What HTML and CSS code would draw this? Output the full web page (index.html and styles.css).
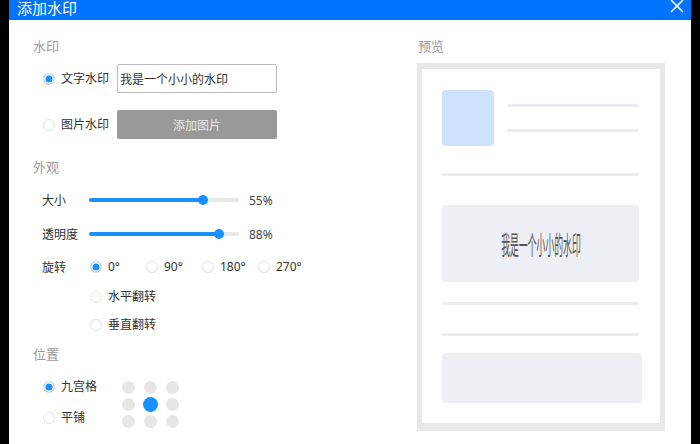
FILE: index.html
```html
<!DOCTYPE html>
<html lang="zh-CN">
<head>
<meta charset="UTF-8" />
<meta name="viewport" content="width=device-width, initial-scale=1" />
<title>添加水印</title>
<link rel="stylesheet" href="styles.css">
</head>
<body>

  <div class="dialog">
    <div class="dialog-header">
      <span class="dialog-title">添加水印</span>
      <svg class="close-btn" width="14" height="14" viewBox="0 0 14 14">
        <path d="M1 0 L13 12 M13 0 L1 12" stroke="#fff" stroke-width="1.6" fill="none" />
      </svg>
    </div>

    <div class="dialog-body">
      <!-- 设置 -->
      <div class="settings">
        <div class="section-title">水印</div>
        <div class="source-row">
          <label class="option"><span class="radio checked"></span>文字水印</label>
          <input type="text" class="text-input" value="我是一个小小的水印" />
        </div>
        <div class="source-row second">
          <label class="option"><span class="radio"></span>图片水印</label>
          <button class="upload-btn">添加图片</button>
        </div>

        <div class="section-title look">外观</div>
        <div class="range-row first">
          <span class="range-label">大小</span>
          <div class="track"><div class="fill" style="width: 76%"><span class="knob"></span></div></div>
          <span class="range-value">55%</span>
        </div>
        <div class="range-row">
          <span class="range-label">透明度</span>
          <div class="track"><div class="fill" style="width: 86.5%"><span class="knob"></span></div></div>
          <span class="range-value">88%</span>
        </div>

        <div class="rotate-row">
          <span class="range-label">旋转</span>
          <label class="option angle"><span class="radio checked"></span>0°</label>
          <label class="option angle"><span class="radio"></span>90°</label>
          <label class="option angle"><span class="radio"></span>180°</label>
          <label class="option angle"><span class="radio"></span>270°</label>
        </div>
        <div class="flip-row">
          <label class="option"><span class="radio"></span>水平翻转</label>
        </div>
        <div class="flip-row last">
          <label class="option"><span class="radio"></span>垂直翻转</label>
        </div>

        <div class="section-title place">位置</div>
        <div class="position">
          <div class="position-modes">
            <label class="option"><span class="radio checked"></span>九宫格</label>
            <label class="option"><span class="radio"></span>平铺</label>
          </div>
          <div class="dot-grid">
            <span class="dot"></span><span class="dot"></span><span class="dot"></span>
            <span class="dot"></span><span class="dot active"></span><span class="dot"></span>
            <span class="dot"></span><span class="dot"></span><span class="dot"></span>
          </div>
        </div>
      </div>

      <!-- 预览 -->
      <div class="preview">
        <div class="section-title">预览</div>
        <div class="preview-frame">
          <div class="mock-head">
            <div class="mock-avatar"></div>
            <div class="mock-lines">
              <div class="mock-line"></div>
              <div class="mock-line"></div>
            </div>
          </div>
          <div class="mock-line full"></div>
          <div class="mock-mark"><span class="mark-text">我是一个小小的水印</span></div>
          <div class="mock-line full after-mark"></div>
          <div class="mock-line full wide-gap"></div>
          <div class="mock-block"></div>
        </div>
      </div>
    </div>
  </div>

</body>
</html>
```

FILE: styles.css
```css
body {
  margin: 0;
  background: #000;
  font-family: "Noto Sans", "Noto Sans CJK SC", sans-serif;
  color: #333;
}
.dialog {
  margin: 0 9px;
  height: 444px;
  background: #fff;
  overflow: hidden;
}
.dialog-header {
  height: 20px;
  background: #0073ff;
  display: flex;
  justify-content: space-between;
  align-items: flex-start;
  padding: 0 7px 0 8px;
}
.dialog-title {
  color: #fff;
  font-size: 15px;
  line-height: 17px;
}
.close-btn {
  margin-top: 0;
}
.dialog-body {
  display: flex;
  padding: 17px 26px 0 24px;
}
.settings {
  flex: 1;
}
.section-title {
  font-size: 13px;
  line-height: 18px;
  color: #999;
}
.section-title.look { margin-top: 19px; }
.section-title.place { margin-top: 10px; }

.option {
  display: flex;
  align-items: center;
  gap: 6px;
  font-size: 12px;
  line-height: 20px;
  height: 20px;
}
.radio {
  width: 12px;
  height: 12px;
  box-sizing: border-box;
  border: 1px solid #e2e2e2;
  border-radius: 50%;
  background: #fff;
  flex: none;
}
.radio.checked {
  background: #1890ff;
  box-shadow: inset 0 0 0 1.5px #fff;
}

.source-row {
  display: flex;
  align-items: center;
  padding-left: 10px;
  margin-top: 9px;
  height: 29px;
}
.source-row.second { margin-top: 17px; }
.source-row .option { width: 74px; }
.text-input {
  width: 160px;
  height: 29px;
  box-sizing: border-box;
  border: 1px solid #bbb;
  border-radius: 2px;
  padding: 0 2px;
  font-family: inherit;
  font-size: 12px;
  color: #333;
}
.upload-btn {
  width: 160px;
  height: 29px;
  border: none;
  border-radius: 2px;
  background: #999;
  color: #e8e8e8;
  font-family: inherit;
  font-size: 12px;
}

.range-row {
  display: flex;
  align-items: center;
  height: 20px;
  padding-left: 9px;
  margin-top: 14px;
  font-size: 12px;
}
.range-label {
  width: 47px;
  font-size: 12px;
  flex: none;
}
.track {
  width: 150px;
  height: 4px;
  border-radius: 2px;
  background: #e8e8e8;
}
.fill {
  position: relative;
  height: 100%;
  border-radius: 2px;
  background: #1890ff;
}
.knob {
  position: absolute;
  right: -5px;
  top: -3px;
  width: 10px;
  height: 10px;
  border-radius: 50%;
  background: #1890ff;
}
.range-value {
  margin-left: 10px;
  color: #444;
}

.rotate-row {
  display: flex;
  align-items: center;
  height: 20px;
  padding-left: 9px;
  margin-top: 13px;
}
.rotate-row .range-label { width: 48px; }
.option.angle { width: 56px; }
.flip-row {
  padding-left: 57px;
  margin-top: 10px;
}
.flip-row.last { margin-top: 8px; }

.position {
  display: flex;
  align-items: flex-start;
  margin-top: 14px;
  padding-left: 10px;
}
.position-modes {
  width: 79px;
  display: flex;
  flex-direction: column;
  gap: 11px;
}
.dot-grid {
  display: grid;
  grid-template-columns: repeat(3, 13px);
  column-gap: 9px;
  row-gap: 4px;
  margin-top: 4px;
}
.dot {
  width: 13px;
  height: 13px;
  border-radius: 50%;
  background: #e6e6e6;
}
.dot.active {
  background: #1890ff;
  transform: scale(1.15);
}

.preview {
  width: 248px;
}
.preview .section-title { padding-left: 1px; }
.preview-frame {
  margin-top: 8px;
  height: 368px;
  box-sizing: border-box;
  border-style: solid;
  border-color: #e8e8e8;
  border-width: 6px 5px 8px 5px;
  padding: 21px 21px 0 20px;
}
.mock-head {
  display: flex;
  gap: 13px;
}
.mock-avatar {
  width: 52px;
  height: 56px;
  border-radius: 4px;
  background: #cfe2fb;
}
.mock-lines {
  flex: 1;
  display: flex;
  flex-direction: column;
  gap: 22px;
  padding-top: 14px;
}
.mock-line {
  height: 3px;
  border-radius: 2px;
  background: #ebedf3;
}
.mock-line.full { margin-top: 27px; }
.mock-line.after-mark { margin-top: 20px; }
.mock-line.wide-gap { margin-top: 28px; }
.mock-mark {
  margin-top: 29px;
  height: 77px;
  border-radius: 4px;
  background: #eeeff4;
  display: flex;
  align-items: center;
  justify-content: center;
  overflow: hidden;
}
.mark-text {
  font-family: "Noto Sans CJK SC", sans-serif;
  font-size: 26px;
  color: #555;
  white-space: nowrap;
  transform: scaleX(0.34);
}
.mock-block {
  margin-top: 17px;
  width: 200px;
  height: 50px;
  border-radius: 4px;
  background: #eeeff4;
}
```
